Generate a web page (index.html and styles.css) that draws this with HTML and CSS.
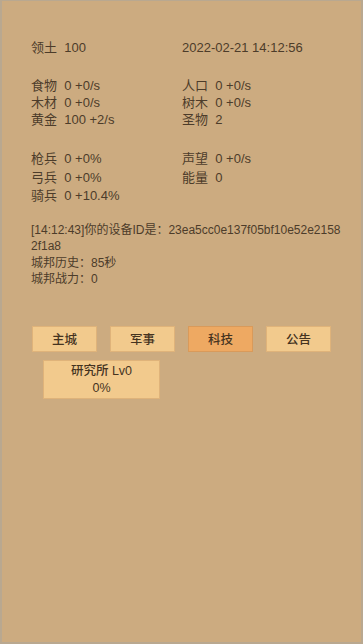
FILE: index.html
```html
<!DOCTYPE html>
<html lang="zh">
<head>
<meta charset="utf-8">
<link rel="stylesheet" href="styles.css">
</head>
<body>
<div class="page">
  <div class="grid top">
    <div>领土&nbsp; 100</div>
    <div>2022-02-21 14:12:56</div>
  </div>
  <div class="grid res">
    <div>食物&nbsp; 0 +0/s</div>
    <div>人口&nbsp; 0 +0/s</div>
    <div>木材&nbsp; 0 +0/s</div>
    <div>树木&nbsp; 0 +0/s</div>
    <div>黄金&nbsp; 100 +2/s</div>
    <div>圣物&nbsp; 2</div>
  </div>
  <div class="grid mil">
    <div>枪兵&nbsp; 0 +0%</div>
    <div>声望&nbsp; 0 +0/s</div>
    <div>弓兵&nbsp; 0 +0%</div>
    <div>能量&nbsp; 0</div>
    <div>骑兵&nbsp; 0 +10.4%</div>
    <div></div>
  </div>
  <div class="log">
    <div>[14:12:43]你的设备ID是：23ea5cc0e137f05bf10e52e21582f1a8</div>
    <div>城邦历史：85秒</div>
    <div>城邦战力：0</div>
  </div>
  <div class="tabs">
    <div class="tab">主城</div>
    <div class="tab">军事</div>
    <div class="tab active">科技</div>
    <div class="tab">公告</div>
  </div>
  <div class="panel">
    <div class="card">研究所 Lv0<br>0%</div>
  </div>
</div>
</body>
</html>
```

FILE: styles.css
```css
html, body {
  margin: 0;
  padding: 0;
  height: 100%;
}
body {
  background: #ccab80;
  font-family: "Liberation Sans", "Noto Sans CJK SC", sans-serif;
  font-size: 13px;
  color: #4c3c2a;
}
.page {
  box-sizing: border-box;
  height: 644px;
  border: 2px solid #b9a890;
  border-top-width: 1px;
  background: #ccab80;
  padding: 38px 0 0 29px;
}
.grid {
  display: grid;
  grid-template-columns: 151px 1fr;
}
.top {
  line-height: 18px;
}
.res {
  margin-top: 20px;
  line-height: 17px;
}
.mil {
  margin-top: 22px;
  line-height: 18.5px;
}
.log {
  margin-top: 16px;
  font-size: 12px;
  line-height: 16.5px;
  width: 312px;
  word-break: break-all;
}
.tabs {
  display: flex;
  gap: 13px;
  margin-top: 38px;
  padding-left: 1px;
}
.tab {
  box-sizing: border-box;
  width: 65px;
  height: 26px;
  background: #f2ca8d;
  border: 1px solid #dfb37a;
  display: flex;
  align-items: center;
  justify-content: center;
  font-size: 12.5px;
  font-weight: 500;
  color: #45331f;
}
.tab.active {
  background: #eea962;
  border-color: #d99a5a;
}
.panel {
  margin-top: 8px;
  padding-left: 12px;
}
.card {
  box-sizing: border-box;
  width: 117px;
  height: 39px;
  background: #f2ca8d;
  border: 1px solid #dfb37a;
  text-align: center;
  line-height: 17px;
  padding-top: 2px;
  font-size: 12.5px;
  font-weight: 500;
  color: #45331f;
}
```
